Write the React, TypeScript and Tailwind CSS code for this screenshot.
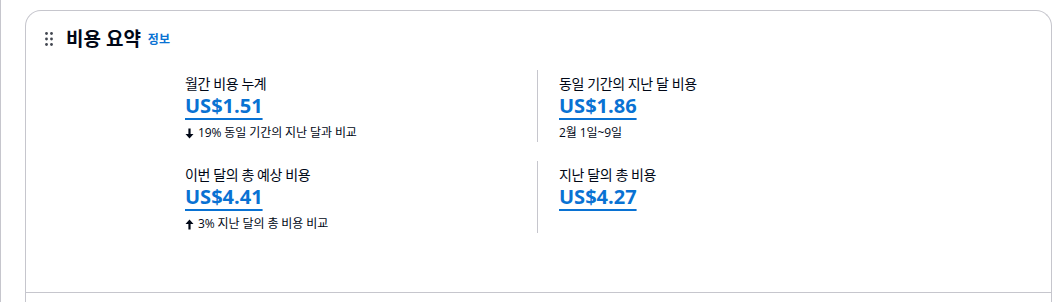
const font = { fontFamily: '"Open Sans", "Noto Sans CJK KR", sans-serif' };

function DragHandle() {
  return (
    <svg width="8" height="14" viewBox="0 0 8 14" className="text-[#424650]">
      {[1.5, 6.5].map((x) =>
        [1.5, 7, 12.5].map((y) => <circle key={`${x}-${y}`} cx={x} cy={y} r="1.4" fill="currentColor" />)
      )}
    </svg>
  );
}

function Arrow({ up }: { up?: boolean }) {
  return (
    <svg width="9" height="11" viewBox="0 0 9 11" className={up ? "" : "rotate-180"}>
      <path d="M4.5 0.5 L8.5 5 L5.6 5 L5.6 10.5 L3.4 10.5 L3.4 5 L0.5 5 Z" fill="#000716" />
    </svg>
  );
}

type Cell = { label: string; value: string; sub?: string; trend?: "up" | "down" };

function Metric({ cell }: { cell: Cell }) {
  return (
    <div className="flex flex-col">
      <div className="text-[14px] leading-[18px] tracking-[-0.4px] text-[#000716]">{cell.label}</div>
      <div className="mt-[1px]">
        <a className="text-[20px] leading-[24px] font-bold text-[#0972d3] underline decoration-[1.5px] underline-offset-[5px]">
          {cell.value}
        </a>
      </div>
      {cell.sub && (
        <div className="mt-[6px] flex items-center gap-[4px] text-[12px] leading-[16px] tracking-[-0.1px] text-[#000716]">
          {cell.trend && <Arrow up={cell.trend === "up"} />}
          <span>{cell.sub}</span>
        </div>
      )}
    </div>
  );
}

export default function App() {
  const left: Cell[] = [
    { label: "월간 비용 누계", value: "US$1.51", sub: "19% 동일 기간의 지난 달과 비교", trend: "down" },
    { label: "이번 달의 총 예상 비용", value: "US$4.41", sub: "3% 지난 달의 총 비용 비교", trend: "up" },
  ];
  const right: Cell[] = [
    { label: "동일 기간의 지난 달 비용", value: "US$1.86", sub: "2월 1일~9일" },
    { label: "지난 달의 총 비용", value: "US$4.27" },
  ];

  return (
    <div className="h-[302px] w-[1054px] overflow-hidden border-l border-[#c6c6cd] bg-white" style={font}>
      <div className="ml-[24px] mt-[10px] h-[300px] w-[1027px] rounded-t-[16px] border border-b-0 border-[#c6c6cd]">
        <div className="flex h-[282px] flex-col border-b border-[#c6c6cd]">
          <div className="flex items-center pl-[19px] pt-[17px]">
            <DragHandle />
            <h2 className="ml-[13px] text-[19px] leading-[22px] font-bold text-[#000716]">비용 요약</h2>
            <span className="ml-[7px] mt-[2px] text-[12px] leading-[16px] font-bold text-[#0972d3]">정보</span>
          </div>
          <div className="mt-[20px] grid grid-rows-2 gap-y-[19px] pl-[159px]">
            {[0, 1].map((r) => (
              <div key={r} className="flex h-[72px]">
                <div className="w-[352px] pt-[5px]">
                  <Metric cell={left[r]} />
                </div>
                <div className="border-l border-[#c6c6cd] pl-[21px] pt-[5px]">
                  <Metric cell={right[r]} />
                </div>
              </div>
            ))}
          </div>
        </div>
      </div>
    </div>
  );
}
